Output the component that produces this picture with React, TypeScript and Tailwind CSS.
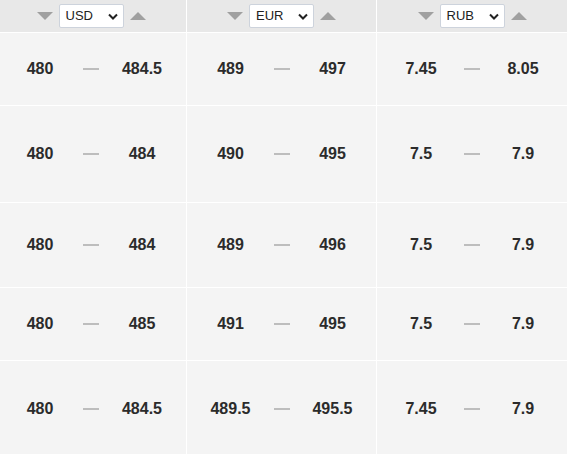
import { FC } from 'react';

type Pair = [string, string];

const currencies = ['USD', 'EUR', 'RUB'];

const rows: { h: string; cells: Pair[] }[] = [
  { h: 'h-[73px]', cells: [['480', '484.5'], ['489', '497'], ['7.45', '8.05']] },
  { h: 'h-[97px]', cells: [['480', '484'], ['490', '495'], ['7.5', '7.9']] },
  { h: 'h-[85px]', cells: [['480', '484'], ['489', '496'], ['7.5', '7.9']] },
  { h: 'h-[73px]', cells: [['480', '485'], ['491', '495'], ['7.5', '7.9']] },
  { h: 'h-[96px]', cells: [['480', '484.5'], ['489.5', '495.5'], ['7.45', '7.9']] },
];

// first column content sits a little left of centre
const colClasses = ['w-[186px] pr-[4px]', 'w-[189px]', 'w-[190px]'];

const Triangle: FC<{ up?: boolean }> = ({ up }) => (
  <svg width="16" height="8" viewBox="0 0 16 8" className="block">
    <path d={up ? 'M0 8 L8 0 L16 8 Z' : 'M0 0 L16 0 L8 8 Z'} fill="#a0a0a0" />
  </svg>
);

const CurrencySelect: FC<{ code: string }> = ({ code }) => (
  <div className="flex h-[24px] w-[65px] items-center justify-between rounded-[2px] border border-[#cdd3dc] bg-white pl-[6px] pr-[5px] text-[13px] text-[#222]">
    <span>{code}</span>
    <svg width="10" height="7" viewBox="0 0 10 7">
      <path d="M1 1.5 L5 5.5 L9 1.5" fill="none" stroke="#222" strokeWidth="2" />
    </svg>
  </div>
);

const RangeCell: FC<{ pair: Pair }> = ({ pair }) => (
  <div className="flex items-center justify-center text-[16px] font-bold text-[#2b2b2b]">
    <span className="w-[80px] text-center">{pair[0]}</span>
    <span className="flex w-[22px] justify-center">
      <span className="block h-[2px] w-[16px] bg-[#bdbdbd]" />
    </span>
    <span className="w-[80px] text-center">{pair[1]}</span>
  </div>
);

export default function App() {
  return (
    <div className="h-[454px] w-[567px] overflow-hidden bg-white font-['Liberation_Sans',Arial,sans-serif]">
      <div className="flex h-[33px] gap-px border-b border-white">
        {currencies.map((code, i) => (
          <div key={code} className={`${colClasses[i]} flex items-center justify-center gap-[6px] bg-[#e8e8e8]`}>
            <Triangle />
            <CurrencySelect code={code} />
            <Triangle up />
          </div>
        ))}
      </div>
      {rows.map((row, r) => (
        <div key={r} className={`${row.h} flex gap-px border-b border-white`}>
          {row.cells.map((pair, i) => (
            <div key={i} className={`${colClasses[i]} flex items-center justify-center bg-[#f4f4f4]`}>
              <RangeCell pair={pair} />
            </div>
          ))}
        </div>
      ))}
    </div>
  );
}
